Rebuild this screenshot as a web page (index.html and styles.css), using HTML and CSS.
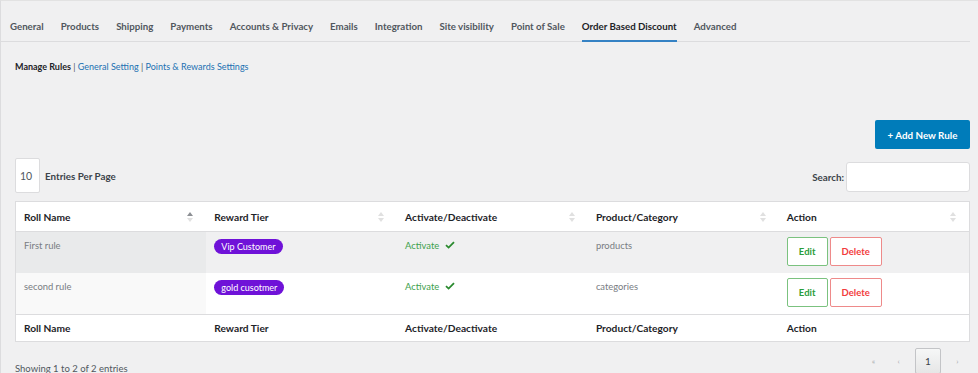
FILE: index.html
```html
<!DOCTYPE html>
<html lang="en">
<head>
  <meta charset="UTF-8" />
  <title>Order Based Discount</title>
  <link rel="stylesheet" href="styles.css">
</head>
<body>
  <div class="wrap">
    <nav class="tabs">
      <a>General</a>
      <a>Products</a>
      <a>Shipping</a>
      <a>Payments</a>
      <a>Accounts &amp; Privacy</a>
      <a>Emails</a>
      <a>Integration</a>
      <a>Site visibility</a>
      <a>Point of Sale</a>
      <a class="active">Order Based Discount</a>
      <a>Advanced</a>
    </nav>

    <div class="subnav">
      <b>Manage Rules</b> | <a>General Setting</a> | <a>Points &amp; Rewards Settings</a>
    </div>

    <div class="toolbar">
      <button class="add-btn">+ Add New Rule</button>
    </div>

    <div class="controls">
      <label class="length">
        <span class="length-box">10</span>
        Entries Per Page
      </label>
      <label class="search">
        Search:
        <input type="text">
      </label>
    </div>

    <table class="rules">
      <thead>
        <tr>
          <th>Roll Name <span class="sort up"></span></th>
          <th>Reward Tier <span class="sort"></span></th>
          <th>Activate/Deactivate <span class="sort"></span></th>
          <th>Product/Category <span class="sort"></span></th>
          <th>Action <span class="sort"></span></th>
        </tr>
      </thead>
      <tbody>
        <tr class="odd">
          <td>First rule</td>
          <td><span class="badge">Vip Customer</span></td>
          <td class="active-cell">Activate <svg class="tick" viewBox="0 0 10 8"><path d="M1 4.2 3.6 6.6 9 1.2" /></svg></td>
          <td>products</td>
          <td class="actions"><button class="edit">Edit</button><button class="delete">Delete</button></td>
        </tr>
        <tr class="even">
          <td>second rule</td>
          <td><span class="badge">gold cusotmer</span></td>
          <td class="active-cell">Activate <svg class="tick" viewBox="0 0 10 8"><path d="M1 4.2 3.6 6.6 9 1.2" /></svg></td>
          <td>categories</td>
          <td class="actions"><button class="edit">Edit</button><button class="delete">Delete</button></td>
        </tr>
      </tbody>
      <tfoot>
        <tr>
          <th>Roll Name</th>
          <th>Reward Tier</th>
          <th>Activate/Deactivate</th>
          <th>Product/Category</th>
          <th>Action</th>
        </tr>
      </tfoot>
    </table>

    <div class="bottom">
      <span class="info">Showing 1 to 2 of 2 entries</span>
      <div class="paging">
        <span>&laquo;</span>
        <span>&lsaquo;</span>
        <span class="current">1</span>
        <span>&rsaquo;</span>
      </div>
    </div>
  </div>
</body>
</html>
```

FILE: styles.css
```css
* {
  box-sizing: border-box;
  font-family: Lato, "Open Sans", sans-serif;
}
body {
  margin: 0;
  background: #f0f0f1;
  overflow: hidden;
}
.wrap {
  height: 373px;
  border-top: 1px solid #e2e2e2;
  border-left: 1px solid #dcdcde;
  padding-right: 8px;
}
.tabs {
  display: flex;
  gap: 17px;
  padding: 0 0 0 9px;
  margin-top: 16px;
  border-bottom: 1px solid #dcdcde;
  height: 25px;
}
.tabs a {
  font-size: 9.7px;
  font-weight: 700;
  color: #50575e;
  padding-top: 3px;
  height: 25px;
  white-space: nowrap;
}
.tabs a.active {
  color: #1d2327;
  border-bottom: 2px solid #3582c4;
}
.subnav {
  margin: 19px 0 0 14px;
  font-size: 9px;
  color: #50575e;
  height: 15px;
}
.subnav b {
  color: #1d2327;
  font-weight: 700;
}
.subnav a {
  color: #2271b1;
}
.toolbar {
  display: flex;
  justify-content: flex-end;
  margin-top: 44px;
}
.add-btn {
  background: #007cba;
  color: #fff;
  border: none;
  border-radius: 2px;
  font-size: 9.8px;
  font-weight: 700;
  width: 95px;
  height: 29px;
}
.controls {
  display: flex;
  justify-content: space-between;
  align-items: center;
  margin: 9px 0 0 14px;
  height: 35px;
}
.length {
  display: flex;
  align-items: center;
  gap: 5px;
  font-size: 9.8px;
  font-weight: 700;
  color: #3c434a;
}
.length-box {
  display: flex;
  align-items: center;
  width: 25px;
  height: 35px;
  padding-left: 4px;
  background: #fff;
  border: 1px solid #dcdcde;
  border-radius: 2px;
  font-size: 10.5px;
  font-weight: 400;
  color: #50575e;
}
.search {
  display: flex;
  align-items: center;
  gap: 2px;
  font-size: 9.8px;
  font-weight: 700;
  color: #3c434a;
  margin-top: 3px;
}
.search input {
  width: 124px;
  height: 30px;
  border: 1px solid #dcdcde;
  border-radius: 3px;
  background: #fff;
}
.rules {
  width: 955px;
  margin: 8px 0 0 14px;
  border-collapse: collapse;
  table-layout: fixed;
  border: 1px solid #dcdcde;
  background: #fff;
}
.rules th {
  text-align: left;
  font-size: 10.2px;
  font-weight: 700;
  color: #1d2327;
  padding: 0 8px;
}
.rules thead th {
  height: 30px;
  position: relative;
  border-bottom: 1px solid #dcdcde;
}
.rules tfoot th {
  height: 27px;
  border-top: 1px solid #dcdcde;
}
.sort {
  position: absolute;
  right: 13px;
  top: 10px;
  width: 6px;
  height: 10px;
}
.sort::before,
.sort::after {
  content: "";
  position: absolute;
  left: 0;
  border-left: 3px solid transparent;
  border-right: 3px solid transparent;
}
.sort::before {
  top: 0;
  border-bottom: 4px solid #e0e0e0;
}
.sort::after {
  bottom: 0;
  border-top: 4px solid #e0e0e0;
}
.sort.up::before {
  border-bottom-color: #8c8f94;
}
.rules td {
  height: 41px;
  vertical-align: top;
  padding: 5px 8px 0;
  font-size: 9.4px;
  color: #787c82;
}
.rules tr.odd td {
  background: #f0f0f1;
}
.rules tr.odd td:first-child {
  background: #e9eaeb;
}
.rules tr.even td:first-child {
  background: #f9f9f9;
}
.rules tr td:first-child,
.rules td:nth-child(3),
.rules td:nth-child(4) {
  padding-top: 8px;
}
.badge {
  display: inline-block;
  background: #6f12d8;
  color: #fff;
  border-radius: 8px;
  padding: 1px 7px;
  font-size: 9px;
  line-height: 13px;
  margin-top: 2px;
}
.active-cell {
  color: #3ca04c !important;
}
.tick {
  width: 10px;
  height: 8px;
  margin-left: 3px;
  fill: none;
  stroke: #2a8a2e;
  stroke-width: 1.8;
}
.actions {
  display: flex;
  gap: 2px;
  padding-left: 8px !important;
}
.actions button {
  height: 29px;
  background: #fff;
  border-radius: 2px;
  font-size: 9.5px;
  font-weight: 700;
}
.edit {
  width: 41px;
  color: #2a9d3a;
  border: 1px solid #7bc27f;
}
.delete {
  width: 52px;
  color: #f23c3c;
  border: 1px solid #ee8a8a;
}
.bottom {
  display: flex;
  justify-content: space-between;
  align-items: flex-start;
  margin: 6px 0 0 14px;
}
.info {
  font-size: 9.5px;
  color: #50575e;
  margin-top: 15px;
}
.paging {
  display: flex;
  align-items: center;
}
.paging span {
  width: 25px;
  text-align: center;
  font-size: 8px;
  color: #a7aaad;
}
.paging span.current {
  width: 26px;
  height: 26px;
  line-height: 24px;
  border: 1px solid #c3c4c7;
  border-radius: 2px;
  background: linear-gradient(#f6f7f7, #e6e6e6);
  color: #3c434a;
  font-size: 10px;
  margin: 0 4px;
}
```
